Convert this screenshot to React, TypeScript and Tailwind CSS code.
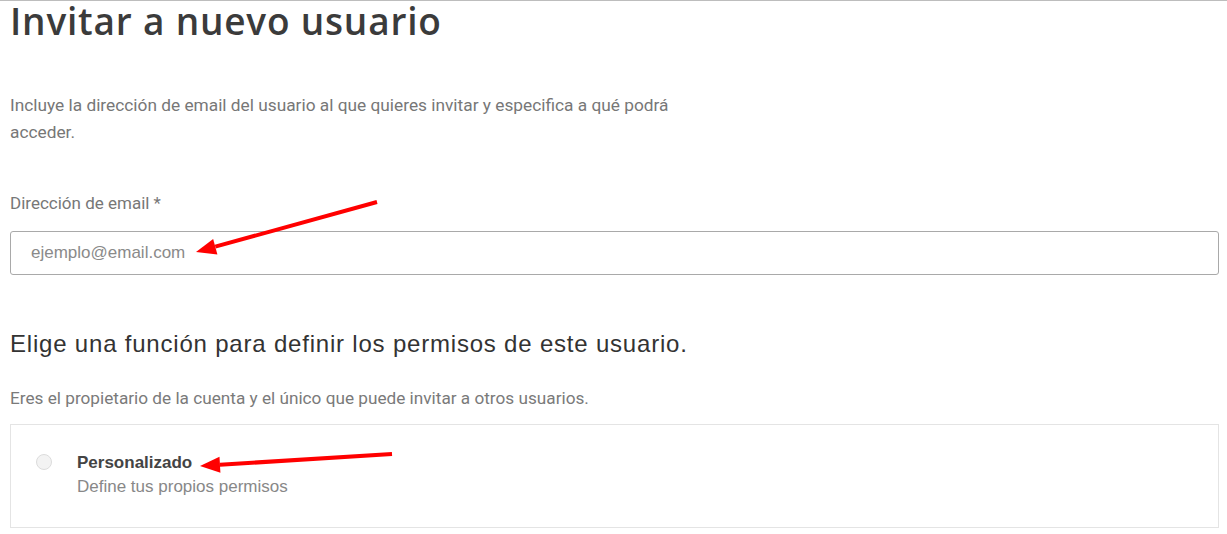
import React from 'react';

const Arrow: React.FC<{ x1: number; y1: number; x2: number; y2: number }> = ({ x1, y1, x2, y2 }) => {
  const a = Math.atan2(y2 - y1, x2 - x1);
  const len = 20;
  const w = 8;
  const bx = x2 - len * Math.cos(a);
  const by = y2 - len * Math.sin(a);
  const px = -Math.sin(a) * w;
  const py = Math.cos(a) * w;
  return (
    <g>
      <line x1={x1} y1={y1} x2={bx} y2={by} stroke="#f00" strokeWidth={4} />
      <polygon points={`${x2},${y2} ${bx + px},${by + py} ${bx - px},${by - py}`} fill="#f00" />
    </g>
  );
};

export default function App() {
  return (
    <div className="relative w-[1227px] h-[534px] bg-white overflow-hidden border-t border-[#bdbdbd]">
      <div className="pl-[10px] pr-[8px]">
        <h1 className="pt-[1px] text-[37px] leading-[38px] font-semibold tracking-[0.8px] text-[#3b3b3b] font-['Open_Sans',sans-serif]">
          Invitar a nuevo usuario
        </h1>

        <p className="mt-[52px] max-w-[690px] text-[17.3px] leading-[27px] text-[#777] font-['Roboto',sans-serif]">
          Incluye la dirección de email del usuario al que quieres invitar y especifica a qué podrá acceder.
        </p>

        <label className="block mt-[46px] text-[17px] leading-[22px] text-[#777] font-['Roboto',sans-serif]">
          Dirección de email *
        </label>
        <input
          type="email"
          placeholder="ejemplo@email.com"
          className="mt-[17px] block w-[1209px] h-[44px] px-[20px] border border-[#a9a9a9] rounded-[3px] text-[17px] font-['Liberation_Sans',Arial,sans-serif] placeholder:text-[#8a8a8a] outline-none"
        />

        <h2 className="mt-[54px] text-[24px] leading-[30px] tracking-[0.8px] text-[#333] font-['Liberation_Sans',Arial,sans-serif]">
          Elige una función para definir los permisos de este usuario.
        </h2>

        <p className="mt-[28px] text-[17.2px] leading-[22px] text-[#7a7a7a] font-['Roboto',sans-serif]">
          Eres el propietario de la cuenta y el único que puede invitar a otros usuarios.
        </p>

        <div className="mt-[15px] w-[1209px] h-[104px] border border-[#e4e4e4] flex items-start pl-[25px] pt-[27px]">
          <span className="mt-[2px] w-[16px] h-[16px] rounded-full border border-[#dcdcdc] bg-[#f3f3f3] shrink-0" />
          <div className="ml-[25px] font-['Liberation_Sans',Arial,sans-serif]">
            <div className="text-[17px] leading-[22px] font-bold text-[#444]">Personalizado</div>
            <div className="mt-[1px] text-[17px] leading-[24px] text-[#888]">Define tus propios permisos</div>
          </div>
        </div>
      </div>

      <svg className="absolute inset-0 pointer-events-none" width={1227} height={534}>
        <Arrow x1={377} y1={201} x2={196} y2={251} />
        <Arrow x1={392} y1={453} x2={200} y2={465} />
      </svg>
    </div>
  );
}
